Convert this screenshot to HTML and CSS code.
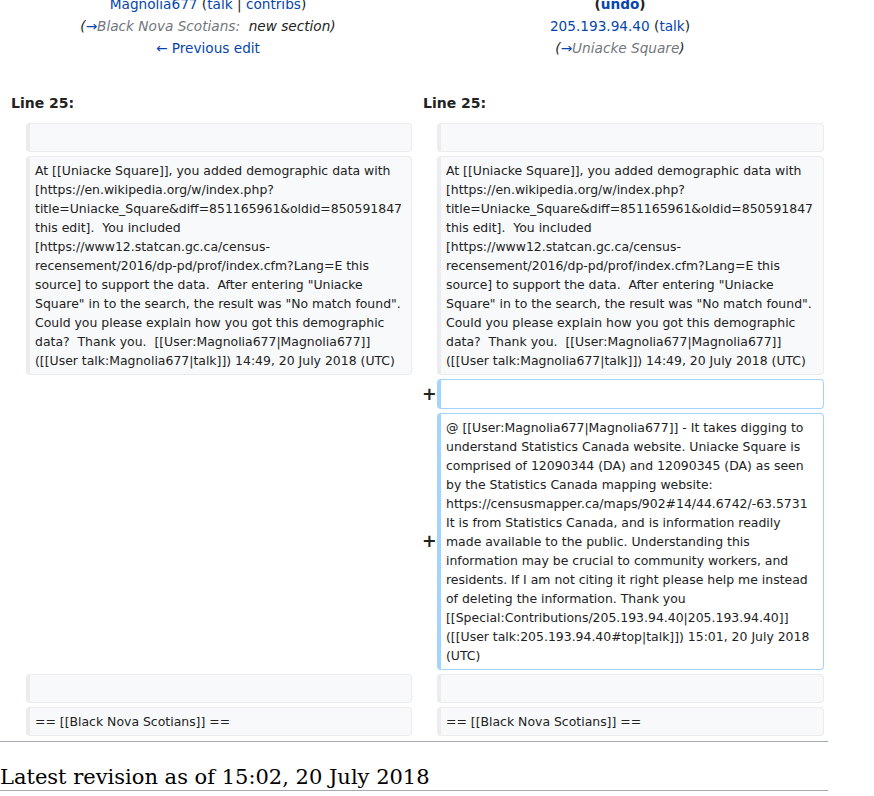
FILE: index.html
```html
<!DOCTYPE html>
<html lang="en">
<head>
<meta charset="utf-8">
<title>Diff</title>
<link rel="stylesheet" href="styles.css">
</head>
<body>
<div class="content">
<table class="diff">
<colgroup><col class="col-marker-l"><col class="col-content-l"><col class="col-marker-r"><col class="col-content-r"></colgroup>
<tr class="diff-title">
<td colspan="2" class="diff-otitle">
<div><a class="link">Magnolia677</a> (<a class="link">talk</a> | <a class="link">contribs</a>)</div>
<div class="comment">(<span class="autocomment"><a class="link">→</a>Black Nova Scotians: </span>&nbsp;new section)</div>
<div><a class="link">← Previous edit</a></div>
</td>
<td colspan="2" class="diff-ntitle">
<div class="undo">(<a class="link">undo</a>)</div>
<div><a class="link">205.193.94.40</a> (<a class="link">talk</a>)</div>
<div class="comment">(<span class="autocomment"><a class="link">→</a>Uniacke Square</span>)</div>
</td>
</tr>
<tr>
<td colspan="2" class="diff-lineno">Line 25:</td>
<td colspan="2" class="diff-lineno">Line 25:</td>
</tr>
<tr>
<td class="diff-marker"></td>
<td class="diff-context"><br></td>
<td class="diff-marker"></td>
<td class="diff-context"><br></td>
</tr>
<tr>
<td class="diff-marker"></td>
<td class="diff-context"><div>At [[Uniacke Square]], you added demographic data with [https://en.wikipedia.org/w/index.php?title=Uniacke_Square&amp;diff=851165961&amp;oldid=850591847 this edit].  You included [https://www12.statcan.gc.ca/census-recensement/2016/dp-pd/prof/index.cfm?Lang=E this source] to support the data.  After entering "Uniacke Square" in to the search, the result was "No match found".  Could you please explain how you got this demographic data?  Thank you.  [[User:Magnolia677|Magnolia677]] ([[User talk:Magnolia677|talk]]) 14:49, 20 July 2018 (UTC)</div></td>
<td class="diff-marker"></td>
<td class="diff-context"><div>At [[Uniacke Square]], you added demographic data with [https://en.wikipedia.org/w/index.php?title=Uniacke_Square&amp;diff=851165961&amp;oldid=850591847 this edit].  You included [https://www12.statcan.gc.ca/census-recensement/2016/dp-pd/prof/index.cfm?Lang=E this source] to support the data.  After entering "Uniacke Square" in to the search, the result was "No match found".  Could you please explain how you got this demographic data?  Thank you.  [[User:Magnolia677|Magnolia677]] ([[User talk:Magnolia677|talk]]) 14:49, 20 July 2018 (UTC)</div></td>
</tr>
<tr>
<td colspan="2" class="diff-empty"></td>
<td class="diff-marker">+</td>
<td class="diff-addedline"><br></td>
</tr>
<tr>
<td colspan="2" class="diff-empty"></td>
<td class="diff-marker">+</td>
<td class="diff-addedline"><div>@ [[User:Magnolia677|Magnolia677]] - It takes digging to understand Statistics Canada website. Uniacke Square is comprised of 12090344 (DA) and 12090345 (DA) as seen by the Statistics Canada mapping website: https://censusmapper.ca/maps/902#14/44.6742/-63.5731 It is from Statistics Canada, and is information readily made available to the public. Understanding this information may be crucial to community workers, and residents. If I am not citing it right please help me instead of deleting the information. Thank you [[Special:Contributions/205.193.94.40|205.193.94.40]] ([[User talk:205.193.94.40#top|talk]]) 15:01, 20 July 2018 (UTC)</div></td>
</tr>
<tr>
<td class="diff-marker"></td>
<td class="diff-context"><br></td>
<td class="diff-marker"></td>
<td class="diff-context"><br></td>
</tr>
<tr>
<td class="diff-marker"></td>
<td class="diff-context"><div>== [[Black Nova Scotians]] ==</div></td>
<td class="diff-marker"></td>
<td class="diff-context"><div>== [[Black Nova Scotians]] ==</div></td>
</tr>
</table>
<hr class="diff-hr">
<h2 class="diff-currentversion-title">Latest revision as of 15:02, 20 July 2018</h2>
</div>
</body>
</html>
```

FILE: styles.css
```css
html, body {
  margin: 0;
  padding: 0;
  background: #ffffff;
}

body {
  font-family: "DejaVu Sans", sans-serif;
  font-size: 14px;
  line-height: 1.6;
  color: #222222;
}

.content {
  width: 828px;
  margin-top: -16px;
}

table.diff {
  width: 828px;
  table-layout: fixed;
  border-spacing: 4px;
  border-collapse: separate;
  margin: 0;
}

.col-marker-l { width: 18px; }
.col-content-l { width: 386px; }
.col-marker-r { width: 17px; }
.col-content-r { width: 387px; }

table.diff td {
  padding: 0.33em 0.5em;
}

table.diff td.diff-otitle,
table.diff td.diff-ntitle {
  text-align: center;
  vertical-align: top;
  font-size: 13.65px;
  line-height: 22px;
  padding: 4.5px 7px 25px 7px;
}

.link {
  color: #0645ad;
  text-decoration: none;
}

.undo {
  font-weight: bold;
}

.comment {
  font-style: italic;
}

.autocomment {
  color: #72777d;
}

td.diff-lineno {
  font-weight: bold;
}

table.diff td.diff-marker {
  text-align: left;
  font-weight: bold;
  font-size: 17.5px;
  line-height: 19px;
  padding: 0 0 0 6px;
}

table.diff td.diff-context,
table.diff td.diff-addedline {
  font-size: 12.45px;
  line-height: 19px;
  vertical-align: top;
  white-space: pre-wrap;
  word-wrap: break-word;
  border-style: solid;
  border-width: 1px 1px 1px 4px;
  border-radius: 4px;
  padding: 4.1px 5px;
}

td.diff-context {
  background: #f8f9fa;
  border-color: #eaecf0;
  color: #222222;
}

td.diff-addedline {
  background: #ffffff;
  border-color: #a3d3ff;
}

hr.diff-hr {
  height: 1px;
  border: 0;
  background: #a2a9b1;
  margin: 1px 0 0.2em 0;
}

h2.diff-currentversion-title {
  font-family: "DejaVu Serif", serif;
  font-weight: normal;
  font-size: 21px;
  line-height: 25px;
  margin: 23px 0 4px 0;
  padding: 0;
  border-bottom: 1px solid #a2a9b1;
  color: #000000;
}
```
